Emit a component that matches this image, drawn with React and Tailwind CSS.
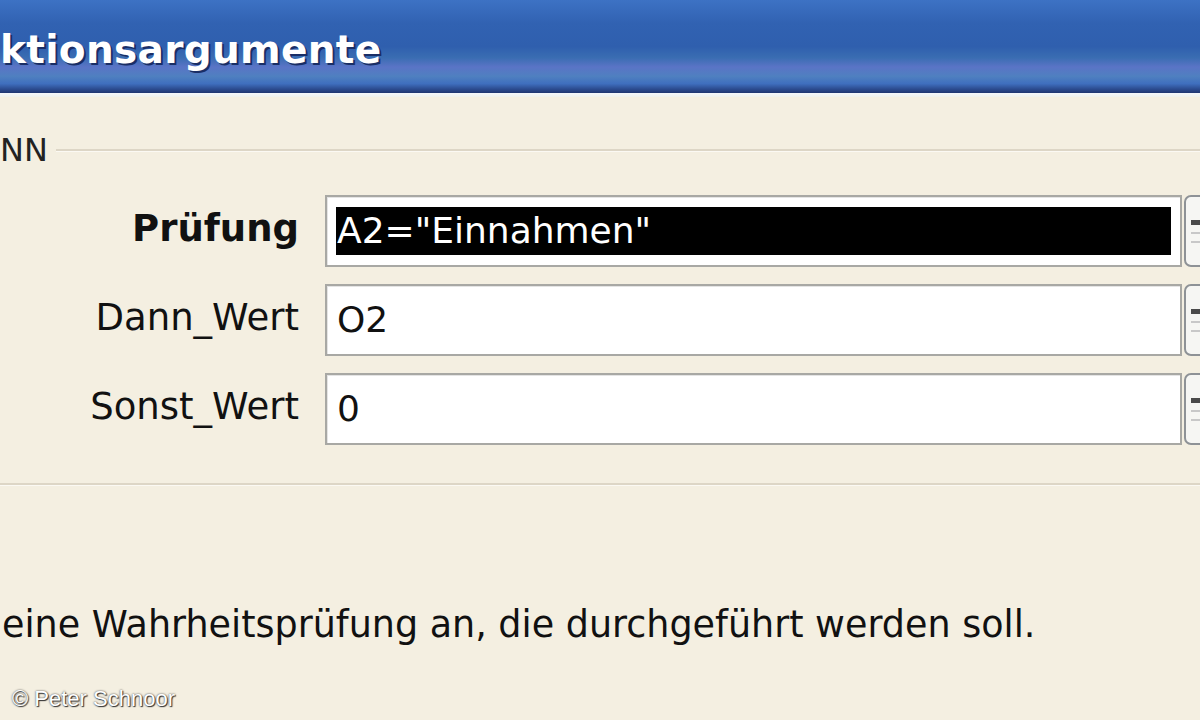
import React from 'react';

const FONT = { fontFamily: '"DejaVu Sans", Verdana, sans-serif' };

function SideButton() {
  return (
    <div className="ml-[2px] h-[72px] w-[40px] shrink-0 rounded-[7px] border-2 border-[#8e9296] bg-[#f6f6f3] flex flex-col justify-center gap-[7px] pl-[5px]">
      <div className="h-[5px] w-[30px] bg-[#4a4a4a]" />
      <div className="h-[2px] w-[30px] bg-[#c8c8c8]" />
      <div className="h-[2px] w-[30px] bg-[#c8c8c8]" />
    </div>
  );
}

function ArgRow({ label, value, bold, selected }) {
  return (
    <div className="flex items-center">
      <div
        className={`w-[299px] shrink-0 pb-[5px] text-right text-[37px] text-[#111] ${bold ? 'font-bold' : ''}`}
        style={FONT}
      >
        {label}
      </div>
      <div className="ml-[26px] flex h-[72px] flex-1 items-center border-2 border-[#a8a8a4] bg-white px-[9px] shadow-[inset_1px_1px_0_#e4e4e4]">
        {selected ? (
          <div className="flex h-[48px] flex-1 items-center bg-black pl-[1px] text-[36px] text-white" style={FONT}>
            {value}
          </div>
        ) : (
          <div className="pl-[1px] text-[36px] text-[#111]" style={FONT}>
            {value}
          </div>
        )}
      </div>
      <SideButton />
    </div>
  );
}

export default function App() {
  return (
    <div className="relative flex h-[720px] w-[1200px] flex-col overflow-hidden bg-[#f4efe1]">
      {/* Title bar */}
      <div className="h-[93px] shrink-0 pt-[30px] bg-[linear-gradient(to_bottom,#3d72c4_0%,#3162b2_25%,#2f5fae_50%,#3a6db2_62%,#5a74c6_72%,#4f80c0_82%,#3f6fbe_90%,#2b4a8e_96%,#1f3670_100%)]">
        <div
          className="text-[39px] font-bold leading-none tracking-[0.3px] text-white [text-shadow:2px_2px_0_#1a2e66]"
          style={FONT}
        >
          ktionsargumente
        </div>
      </div>
      <div className="h-[4px] shrink-0 bg-[linear-gradient(to_bottom,#f4f7fb,#eef1ec)]" />

      {/* Group box */}
      <div className="mt-[36px] flex items-center">
        <div className="text-[32px] leading-[34px] text-[#222]" style={FONT}>
          NN
        </div>
        <div className="ml-[8px] flex-1 border-t-2 border-[#ddd6c6] shadow-[0_1px_0_#fbf9f3]" />
      </div>

      <div className="mr-[-24px] mt-[28px] flex flex-col gap-[17px]">
        <ArgRow label="Prüfung" value={'A2="Einnahmen"'} bold selected />
        <ArgRow label="Dann_Wert" value="O2" />
        <ArgRow label="Sonst_Wert" value="0" />
      </div>

      <div className="mt-[38px] border-t-2 border-[#ddd6c6] shadow-[0_1px_0_#fbf9f3]" />

      {/* Description */}
      <div className="mt-[120px] pl-[2px] text-[36.5px] leading-[40px] text-[#111]" style={FONT}>
        eine Wahrheitsprüfung an, die durchgeführt werden soll.
      </div>

      <div
        className="absolute bottom-[10px] left-[12px] text-[22px] leading-none text-white [text-shadow:0_0_2px_#333,1px_1px_1px_#333]"
        style={{ fontFamily: '"Liberation Sans", Arial, sans-serif' }}
      >
        © Peter Schnoor
      </div>
    </div>
  );
}
